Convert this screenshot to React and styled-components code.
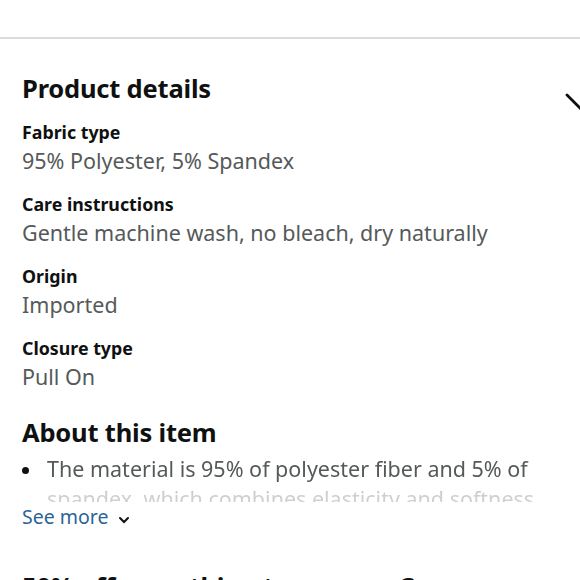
import styled, { createGlobalStyle } from "styled-components";

const GlobalStyle = createGlobalStyle`
  html, body {
    margin: 0;
    padding: 0;
    background: #fff;
    overflow: hidden;
  }
  body {
    font-family: "Noto Sans", "Open Sans", Arial, sans-serif;
    color: #0f1111;
  }
`;

const Page = styled.div`
  width: 580px;
  height: 580px;
  overflow: hidden;
  padding-top: 37px;
  box-sizing: border-box;
`;

const Divider = styled.div`
  height: 2px;
  background: #dcdcdc;
`;

const Section = styled.section`
  padding: 0 0 0 22px;
`;

const HeaderRow = styled.div`
  display: flex;
  align-items: center;
  margin-top: 30px;
  position: relative;
`;

const Heading = styled.h2`
  margin: 0;
  font-size: 25.5px;
  font-weight: 700;
  line-height: 38px;
  color: #0f1111;
  letter-spacing: -0.2px;
`;

const Chevron = styled.svg`
  position: absolute;
  left: 543px;
  top: 24px;
  width: 30px;
  height: 30px;
  overflow: visible;
`;

const Details = styled.dl`
  margin: 12px 0 0;
  display: flex;
  flex-direction: column;
  gap: 14px;
`;

const DetailItem = styled.div`
  display: flex;
  flex-direction: column;
`;

const Label = styled.dt`
  font-size: 17.8px;
  font-weight: 700;
  line-height: 26px;
  color: #0f1111;
`;

const Value = styled.dd`
  margin: 0;
  font-size: 21.5px;
  line-height: 32px;
  color: #565959;
`;

const AboutHeading = styled(Heading)`
  margin-top: 20px;
`;

const BulletClip = styled.div`
  height: 48px;
  overflow: hidden;
  margin-top: 3px;
  -webkit-mask-image: linear-gradient(to bottom, #000 0, #000 32px, rgba(0,0,0,0.3) 38px, rgba(0,0,0,0.28) 48px);
  mask-image: linear-gradient(to bottom, #000 0, #000 32px, rgba(0,0,0,0.3) 38px, rgba(0,0,0,0.28) 48px);
`;

const BulletRow = styled.div`
  display: flex;
  align-items: flex-start;
  padding-right: 20px;
`;

const Dot = styled.span`
  flex: none;
  width: 7px;
  height: 7px;
  border-radius: 50%;
  background: #0f1111;
  margin: 13px 18px 0 0;
`;

const BulletText = styled.p`
  margin: 0;
  font-size: 21.5px;
  line-height: 30px;
  color: #565959;
`;

const SeeMore = styled.a`
  display: inline-flex;
  align-items: center;
  gap: 10px;
  font-size: 19.5px;
  line-height: 28px;
  margin-top: 1px;
  color: #2a6496;

  svg {
    width: 12px;
    height: 12px;
    margin-top: 6px;
  }
`;

const NextHeading = styled(Heading)`
  margin-top: 36px;
  white-space: nowrap;
`;

const details = [
  ["Fabric type", "95% Polyester, 5% Spandex"],
  ["Care instructions", "Gentle machine wash, no bleach, dry naturally"],
  ["Origin", "Imported"],
  ["Closure type", "Pull On"],
];

export default function App() {
  return (
    <>
      <GlobalStyle />
      <Page>
        <Divider />
        <Section>
          <HeaderRow>
            <Heading>Product details</Heading>
            <Chevron viewBox="0 0 30 30" fill="none" stroke="#0f1111" strokeWidth="2.8" strokeLinecap="round">
              <path d="M2 2 L15 15 L28 2" />
            </Chevron>
          </HeaderRow>
          <Details>
            {details.map(([label, value]) => (
              <DetailItem key={label}>
                <Label>{label}</Label>
                <Value>{value}</Value>
              </DetailItem>
            ))}
          </Details>
          <AboutHeading>About this item</AboutHeading>
          <BulletClip>
            <BulletRow>
              <Dot />
              <BulletText>
                The material is 95% of polyester fiber and 5% of spandex, which combines elasticity and softness
              </BulletText>
            </BulletRow>
          </BulletClip>
          <SeeMore>
            See more
            <svg viewBox="0 0 12 12" fill="none" stroke="#0f1111" strokeWidth="2" strokeLinecap="round">
              <path d="M2 4 L6 8 L10 4" />
            </svg>
          </SeeMore>
          <NextHeading>50% off something to save on Coupon</NextHeading>
        </Section>
      </Page>
    </>
  );
}
